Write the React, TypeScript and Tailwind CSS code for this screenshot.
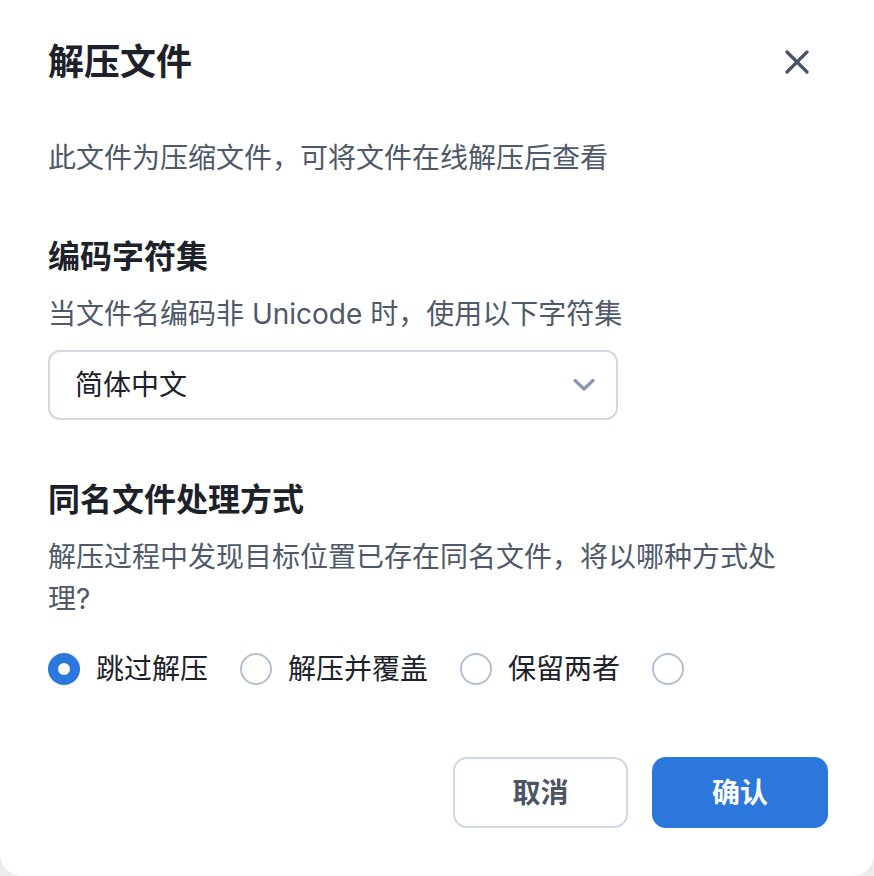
import { useState } from "react";

const FONT = { fontFamily: '"Inter", "Noto Sans CJK SC", sans-serif' };

const CONFLICT_OPTIONS = [
  { value: "skip", label: "跳过解压" },
  { value: "overwrite", label: "解压并覆盖" },
  { value: "keep", label: "保留两者" },
  { value: "other", label: "" },
];

function CloseIcon() {
  return (
    <svg width="24" height="24" viewBox="0 0 24 24" fill="none">
      <path d="M2 2 22 22M22 2 2 22" stroke="#475467" strokeWidth="3.2" strokeLinecap="round" />
    </svg>
  );
}

function Chevron() {
  return (
    <svg width="24" height="14" viewBox="0 0 24 14" fill="none">
      <path d="M3 2.5 12 11 21 2.5" stroke="#8797ad" strokeWidth="3.2" strokeLinecap="round" strokeLinejoin="round" />
    </svg>
  );
}

function Radio({ checked }: { checked: boolean }) {
  return checked ? (
    <span className="flex h-8 w-8 shrink-0 items-center justify-center rounded-full bg-[#2b77dc]">
      <span className="h-3 w-3 rounded-full bg-white" />
    </span>
  ) : (
    <span className="h-8 w-8 shrink-0 rounded-full border-2 border-[#b3c0d1] bg-white" />
  );
}

export default function App() {
  const [mode, setMode] = useState("skip");

  return (
    <div className="min-h-[876px] bg-[#ececec]" style={FONT}>
      <div className="flex h-[876px] w-[874px] flex-col rounded-b-[22px] bg-white pl-12 pr-[46px] pt-[38px]">
        <header className="flex h-12 items-center justify-between">
          <h1 className="text-[36px] font-semibold leading-[48px] text-[#1d2129]">解压文件</h1>
          <button className="mr-[15px] flex h-8 w-8 items-center justify-center">
            <CloseIcon />
          </button>
        </header>

        <p className="mt-[51px] text-[28px] leading-[42px] text-[#4e5969]">
          此文件为压缩文件，可将文件在线解压后查看
        </p>

        <section className="mt-[54px]">
          <h2 className="text-[32px] font-semibold leading-[48px] text-[#1d2129]">编码字符集</h2>
          <p className="mt-3 text-[28px] leading-[42px] text-[#4e5969]">
            当文件名编码非 Unicode 时，使用以下字符集
          </p>
          <div className="mt-[15px] flex h-[70px] w-[570px] items-center justify-between rounded-xl border-2 border-[#d0d8e3] pl-[25px] pr-[20px]">
            <span className="text-[28px] text-[#1d2129]">简体中文</span>
            <Chevron />
          </div>
        </section>

        <section className="mt-[56px]">
          <h2 className="text-[32px] font-semibold leading-[48px] text-[#1d2129]">同名文件处理方式</h2>
          <p className="mt-3 w-[770px] text-[28px] leading-[42px] text-[#4e5969]">
            解压过程中发现目标位置已存在同名文件，将以哪种方式处理?
          </p>
          <div className="mt-[28px] flex h-[42px] items-center gap-8">
            {CONFLICT_OPTIONS.map((opt) => (
              <label
                key={opt.value}
                className="flex cursor-pointer items-center gap-4"
                onClick={() => setMode(opt.value)}
              >
                <Radio checked={mode === opt.value} />
                {opt.label && (
                  <span className="text-[28px] leading-[42px] text-[#1d2129]">{opt.label}</span>
                )}
              </label>
            ))}
          </div>
        </section>

        <footer className="mt-[67px] flex justify-end gap-6">
          <button className="h-[71px] w-[175px] rounded-[14px] border-2 border-[#d0d8e3] bg-white text-[28px] font-semibold text-[#4b5563]">
            取消
          </button>
          <button className="h-[71px] w-[176px] rounded-[14px] bg-[#2b77dc] text-[28px] font-semibold text-white">
            确认
          </button>
        </footer>
      </div>
    </div>
  );
}
